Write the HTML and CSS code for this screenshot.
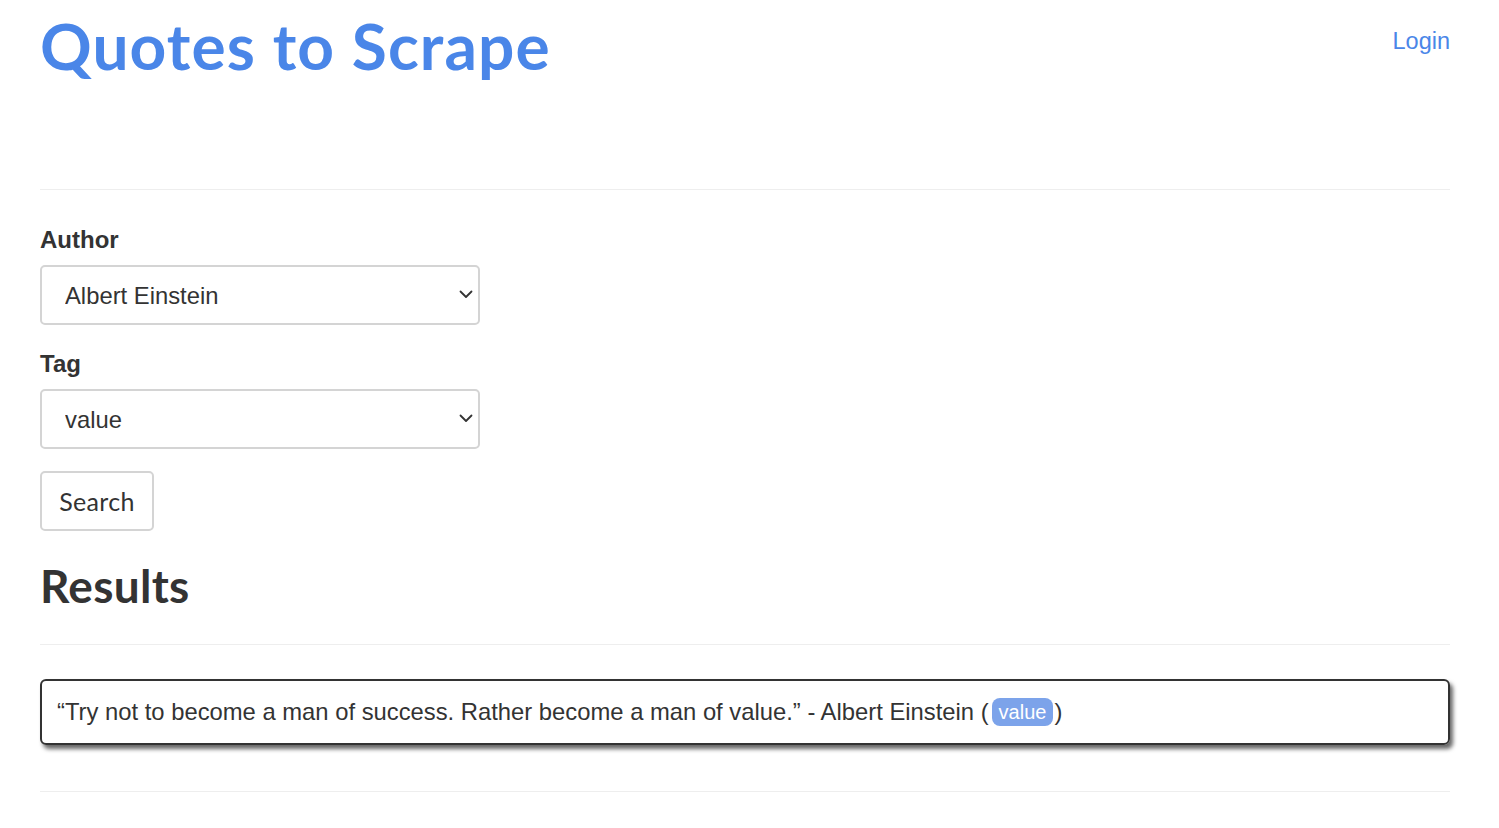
FILE: index.html
```html
<!DOCTYPE html>
<html lang="en">
<head>
<meta charset="utf-8">
<title>Quotes to Scrape</title>
<link rel="stylesheet" href="styles.css">
</head>
<body>
<div class="container">
  <header class="header">
    <h1 class="brand"><a href="#">Quotes to Scrape</a></h1>
    <a class="login" href="#">Login</a>
  </header>
  <hr class="rule">
  <form class="filters">
    <label class="label" for="author">Author</label>
    <div class="select-wrap">
      <select id="author" class="select"><option>Albert Einstein</option></select>
      <svg class="chev" width="14" height="9" viewBox="0 0 14 9"><path d="M1.5 1.5 L7 7 L12.5 1.5" fill="none" stroke="#333" stroke-width="1.8" stroke-linecap="round" stroke-linejoin="round"/></svg>
    </div>
    <label class="label" for="tag">Tag</label>
    <div class="select-wrap">
      <select id="tag" class="select"><option>value</option></select>
      <svg class="chev" width="14" height="9" viewBox="0 0 14 9"><path d="M1.5 1.5 L7 7 L12.5 1.5" fill="none" stroke="#333" stroke-width="1.8" stroke-linecap="round" stroke-linejoin="round"/></svg>
    </div>
    <button type="button" class="btn">Search</button>
  </form>
  <h2 class="results-title">Results</h2>
  <hr class="rule rule-results">
  <div class="quote">“Try not to become a man of success. Rather become a man of value.” - Albert Einstein (<span class="tag">value</span>)</div>
  <hr class="rule rule-bottom">
</div>
</body>
</html>
```

FILE: styles.css
```css
html, body {
  margin: 0;
  padding: 0;
  background: #fff;
}
body {
  font-family: "Liberation Sans", Arial, sans-serif;
  color: #333;
}
.container {
  padding: 0 49px 0 40px;
}
.header {
  display: flex;
  justify-content: space-between;
  align-items: flex-start;
  height: 189px;
}
.brand {
  margin: 10px 0 0 0;
  font-family: Lato, "Open Sans", sans-serif;
  font-weight: 700;
  font-size: 64px;
  line-height: 72px;
  letter-spacing: 1.1px;
}
.brand a {
  color: #4a86e8;
  text-decoration: none;
}
.login {
  margin-top: 26px;
  font-size: 23.5px;
  line-height: 30px;
  color: #4a86e8;
  text-decoration: none;
}
.rule {
  margin: 0;
  border: 0;
  border-top: 1px solid #eee;
  height: 0;
}
.filters {
  display: flex;
  flex-direction: column;
  align-items: flex-start;
  padding-top: 34px;
}
.label {
  font-weight: 700;
  font-size: 24px;
  line-height: 32px;
  margin-bottom: 9px;
}
.select-wrap {
  position: relative;
  width: 440px;
  margin-bottom: 23px;
}
.select {
  appearance: none;
  -webkit-appearance: none;
  display: block;
  width: 440px;
  height: 60px;
  box-sizing: border-box;
  border: 2px solid #d4d4d4;
  border-radius: 5px;
  background: #fff;
  padding: 0 0 0 23px;
  font-family: "Liberation Sans", Arial, sans-serif;
  font-size: 23.8px;
  color: #333;
}
.chev {
  position: absolute;
  right: 7px;
  top: 25px;
}
.btn {
  width: 114px;
  height: 60px;
  box-sizing: border-box;
  border: 2px solid #d4d4d4;
  border-radius: 5px;
  background: #fff;
  font-family: Lato, "Open Sans", sans-serif;
  font-size: 25px;
  letter-spacing: 0.3px;
  color: #333;
  padding: 0;
  margin-top: -1px;
}
.results-title {
  margin: 30px 0 0 0;
  font-family: Lato, "Open Sans", sans-serif;
  font-weight: 700;
  font-size: 46px;
  line-height: 50px;
  letter-spacing: 0.3px;
  color: #333;
}
.rule-results {
  margin-top: 33px;
}
.quote {
  margin-top: 34px;
  border: 2px solid #333;
  border-radius: 6px;
  box-shadow: 3px 4px 4px rgba(0, 0, 0, 0.6);
  padding: 0 15px;
  height: 66px;
  box-sizing: border-box;
  display: flex;
  align-items: center;
  font-size: 23.8px;
  white-space: pre;
}
.tag {
  display: inline-block;
  margin-left: 3px;
  margin-right: 1px;
  background: #7ca3ea;
  color: #fff;
  border-radius: 8px;
  padding: 0 7px;
  line-height: 28px;
  font-size: 20px;
}
.rule-bottom {
  margin-top: 46px;
}
```
